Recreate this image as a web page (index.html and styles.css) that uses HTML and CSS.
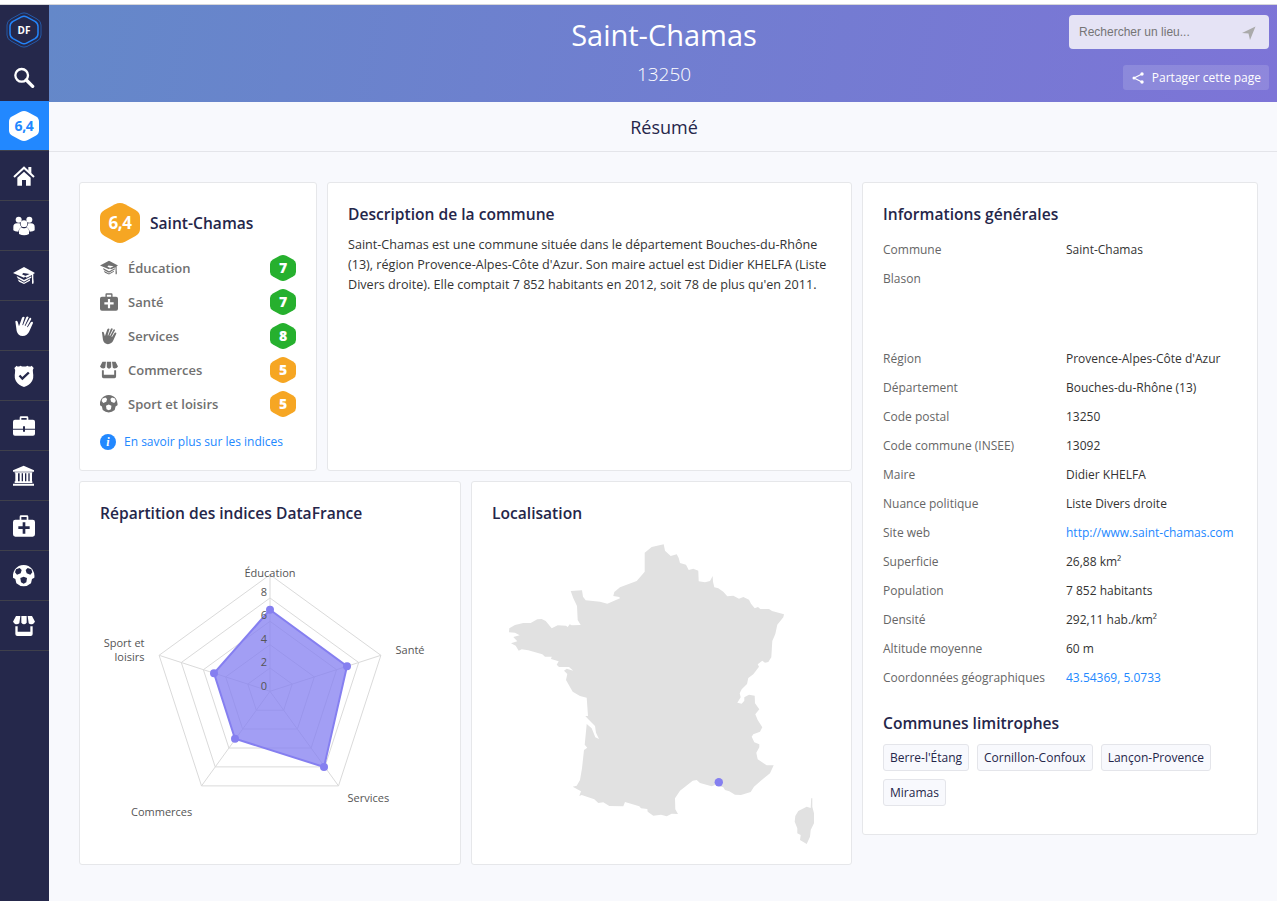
FILE: index.html
```html
<!DOCTYPE html>
<html lang="fr">
<head>
<meta charset="utf-8">
<title>Saint-Chamas</title>
<link rel="stylesheet" href="styles.css">
</head>
<body>
<svg class="defs" aria-hidden="true">
<symbol id="hex" viewBox="0 0 40 40"><path d="M15 1.3Q20-1.2 25 1.3L35.5 7Q40 9.6 40 14V26Q40 30.4 35.5 33L25 38.7Q20 41.2 15 38.7L4.500 33Q0 30.400 0 26V14Q0 9.600 4.500 7Z"/></symbol>
<symbol id="search" viewBox="0 0 66 66"><circle cx="26" cy="25" r="19" fill="none" stroke="currentColor" stroke-width="7"/><path d="M40 39L59 58" stroke="currentColor" stroke-width="10" stroke-linecap="round"/></symbol>
<symbol id="home" viewBox="0 0 66 66"><path d="M3 36L33 8L63 36" fill="none" stroke="currentColor" stroke-width="6"/><path d="M46 6h9v20l-9-8zM13 38L33 20L53 38V62H39V45H27V62H13z"/></symbol>
<symbol id="people" viewBox="0 0 66 66"><circle cx="17" cy="14" r="9"/><circle cx="49" cy="14" r="9"/><path d="M1 46V36Q1 25 12 25H20Q22 34 27 37Q18 39 16 50Q5 50 1 46ZM65 46V36Q65 25 54 25H46Q44 34 39 37Q48 39 50 50Q61 50 65 46Z"/><circle cx="33" cy="26" r="10"/><path d="M18 57V48Q18 38 27 38Q33 42 39 38Q48 38 48 48V57Q34 65 18 57Z"/></symbol>
<symbol id="cap" viewBox="0 0 66 66"><path d="M0 24L33 6L66 24L61 27V40Q63 52 61 56H57V30L41 38L35 34L50 27L31 24L27 28L38 33L33 38ZM11 33L33 45L55 34V38L33 50L14 40ZM14 43L33 53L51 43V47L33 57L18 50Z"/></symbol>
<symbol id="hand" viewBox="0 0 66 66"><path d="M7 19Q11 15 14 20L18 34L27 8Q31 3 35 7L28 30L30 31L40 6Q44 2 47 7L35 32L37 33L50 9Q54 6 55 12L42 36L44 37L54 21Q60 18 60 24L49 49Q43 63 29 63Q15 63 11 48L8 26Z"/></symbol>
<symbol id="shield" viewBox="0 0 66 66"><path fill-rule="evenodd" d="M11 2Q15 7 22 2Q33 7 44 2Q50 7 56 2L62 9Q58 14 60 23Q66 54 33 66Q0 54 6 23Q8 14 4 9ZM17 34L28 46L50 25L45 20L28 36L22 29Z"/></symbol>
<symbol id="case" viewBox="0 0 66 66"><path fill-rule="evenodd" d="M20 14V8Q20 4 24 4H42Q46 4 46 8V14H60Q66 14 66 20V41H36V34H30V41H0V20Q0 14 6 14ZM25 14H41V9H25ZM0 44H30V50H36V44H66V56Q66 62 60 62H6Q0 62 0 56Z"/></symbol>
<symbol id="bank" viewBox="0 0 66 66"><path d="M0 16L32 2L63 16V20H0ZM5 22H58V25H5ZM7 25H15V51H7ZM20 25H26V51H20ZM30 25H36V51H30ZM40 25H46V51H40ZM50 25H57V51H50ZM5 49H58V54H5ZM0 56H63V62H0Z"/></symbol>
<symbol id="med" viewBox="0 0 66 66"><path fill-rule="evenodd" d="M20 14V5Q20 1 24 1H42Q46 1 46 5V14H59Q66 14 66 21V58Q66 65 59 65H7Q0 65 0 58V21Q0 14 7 14ZM25 14H41V6H25ZM29 22V34H16V42H29V56H37V42H50V34H37V22Z"/></symbol>
<symbol id="ball" viewBox="0 0 66 66"><path fill-rule="evenodd" d="M32 0Q48 0 58 13Q66 26 64 38L57 42L54 55Q44 64 32 64Q20 64 10 55L7 42L0 38Q-2 26 6 13Q16 0 32 0ZM9 13L20 9L26 15L23 25L12 29L6 22ZM55 13L44 9L38 15L41 25L52 29L58 22ZM22 39L32 35L42 39L40 52L32 56L24 52Z"/></symbol>
<symbol id="store" viewBox="0 0 66 66"><path d="M9 3H22L19 25Q12 30 5 26L0 20ZM25 3H41V23Q33 33 25 23ZM44 3H57L66 20L61 26Q52 30 47 25ZM7 34H14V50H52V34H59V57Q59 63 53 63H13Q7 63 7 57Z"/></symbol>
</svg>
<div class="topline"></div>
<div class="app">
<nav class="side">
  <a class="logo"><svg class="logo-ring" viewBox="0 0 36 36"><path d="M15 1.5Q18 .3 21 1.500L31 7Q35 9 35 13V23Q35 27 31 29L21 34.500Q18 35.700 15 34.500L5 29Q1 27 1 23V13Q1 9 5 7Z" fill="none" stroke="#2459a8"/><path d="M15.500 4.800Q18 3.500 20.500 4.800L29 9.300Q32 11 32 14.500V21.500Q32 25 29 26.700L20.500 31.200Q18 32.500 15.500 31.200L7 26.700Q4 25 4 21.500V14.500Q4 11 7 9.300Z" fill="none" stroke="#2485fb" stroke-width="1.500"/></svg><b>DF</b></a>
  <a class="find"><svg><use href="#search"/></svg></a>
  <a class="cell on"><span class="hex note"><svg><use href="#hex"/></svg><b>6,4</b></span></a>
  <a class="cell"><svg><use href="#home"/></svg></a>
  <a class="cell"><svg><use href="#people"/></svg></a>
  <a class="cell"><svg><use href="#cap"/></svg></a>
  <a class="cell"><svg><use href="#hand"/></svg></a>
  <a class="cell"><svg><use href="#shield"/></svg></a>
  <a class="cell"><svg><use href="#case"/></svg></a>
  <a class="cell"><svg><use href="#bank"/></svg></a>
  <a class="cell"><svg><use href="#med"/></svg></a>
  <a class="cell"><svg><use href="#ball"/></svg></a>
  <a class="cell"><svg><use href="#store"/></svg></a>
</nav>
<div class="page">
<header class="head">
  <div class="titles"><h1>Saint-Chamas</h1><p>13250</p></div>
  <div class="tools">
    <div class="field"><span>Rechercher un lieu...</span><svg viewBox="0 0 14 14"><path d="M13.500 .5L0 7L6.500 7.500L8 14Z"/></svg></div>
    <a class="share"><svg viewBox="0 0 12 12"><path d="M10 2L2 6L10 10" fill="none" stroke="#fff" stroke-width="1.200"/><circle cx="10" cy="2" r="1.700"/><circle cx="2" cy="6" r="1.500"/><circle cx="10" cy="10" r="1.700"/></svg>Partager cette page</a>
  </div>
</header>
<div class="tab">Résumé</div>
<main class="content">
<div class="left">
  <div class="row">
    <section class="card scores">
      <div class="score-head"><span class="hex big orange"><svg><use href="#hex"/></svg><b>6,4</b></span><h2>Saint-Chamas</h2></div>
      <ul>
        <li><svg class="ico"><use href="#cap"/></svg><span>Éducation</span><span class="hex green"><svg><use href="#hex"/></svg><b>7</b></span></li>
        <li><svg class="ico"><use href="#med"/></svg><span>Santé</span><span class="hex green"><svg><use href="#hex"/></svg><b>7</b></span></li>
        <li><svg class="ico"><use href="#hand"/></svg><span>Services</span><span class="hex green"><svg><use href="#hex"/></svg><b>8</b></span></li>
        <li><svg class="ico"><use href="#store"/></svg><span>Commerces</span><span class="hex orange"><svg><use href="#hex"/></svg><b>5</b></span></li>
        <li><svg class="ico"><use href="#ball"/></svg><span>Sport et loisirs</span><span class="hex orange"><svg><use href="#hex"/></svg><b>5</b></span></li>
      </ul>
      <a class="more"><i>i</i>En savoir plus sur les indices</a>
    </section>
    <section class="card desc"><h2>Description de la commune</h2><p>Saint-Chamas est une commune située dans le département Bouches-du-Rhône (13), région Provence-Alpes-Côte d'Azur. Son maire actuel est Didier KHELFA (Liste Divers droite). Elle comptait 7 852 habitants en 2012, soit 78 de plus qu'en 2011.</p></section>
  </div>
  <div class="row">
    <section class="card radar"><h2>Répartition des indices DataFrance</h2>
      <svg viewBox="90 540 360 290">
        <g class="web">
          <path d="M270 574.700L380.900 655.300L338.500 785.900H201.500L159.100 655.300Z"/>
          <path d="M270 598L358.700 662.500L324.800 766.900H215.200L181.300 662.500Z"/>
          <path d="M270 621.300L336.600 669.700L311.100 748H228.900L203.400 669.700Z"/>
          <path d="M270 644.700L314.300 676.900L297.400 729H242.600L225.700 676.900Z"/>
          <path d="M270 668L292.200 684.100L283.700 710.200H256.300L247.800 684.100Z"/>
          <path d="M270 574.700V691.300L380.900 655.300M270 691.300L338.500 785.900M270 691.300L201.500 785.900M270 691.300L159.100 655.300"/>
        </g>
        <path class="area" d="M270 609.700L347 666.100L324 767L235 738.700L214 673.300Z"/>
        <g class="dots"><circle cx="270" cy="609.700" r="4"/><circle cx="347" cy="666.200" r="4"/><circle cx="324" cy="767" r="4"/><circle cx="235" cy="738.700" r="4"/><circle cx="214" cy="673.300" r="4"/></g>
        <g class="lab">
          <text x="270" y="577" text-anchor="middle">Éducation</text>
          <text x="395.500" y="654">Santé</text>
          <text x="347.500" y="802">Services</text>
          <text x="131" y="816">Commerces</text>
          <text x="144.500" y="647" text-anchor="end">Sport et</text>
          <text x="144.500" y="661" text-anchor="end">loisirs</text>
          <text x="267" y="596" text-anchor="end">8</text>
          <text x="267" y="619" text-anchor="end">6</text>
          <text x="267" y="643" text-anchor="end">4</text>
          <text x="267" y="666" text-anchor="end">2</text>
          <text x="267" y="690" text-anchor="end">0</text>
        </g>
      </svg>
    </section>
    <section class="card map"><h2>Localisation</h2>
      <svg viewBox="490 530 340 320">
        <path class="land" d="M663.700 544.300L665 550.700L670.700 556L676.700 554.300L678.700 558L680 563L686 564.700L688.700 570L693.300 568.700L698.300 570.700L698.700 581.300L705 582.300L710 581L712.700 576L713 581.700L714.300 587.300L718.300 588.300L723.300 591.700L727.300 596.300L733.300 595.700L739 598.700L743.300 597L749 599.700L751 603.700L754.700 608.300L758 607L760.300 609H769L772 611L784 614.300L783.300 617.300L777.300 624.700L775.300 634L772.300 641L771.300 657.300L768.300 662L765 662.700L762.300 660.700L757.700 664.300L759 666.700L753.300 674.300L748.300 678L747 684L741.700 689.300L739.700 693.300L740.700 697.300L737.300 702.700L741.700 703.700L744.300 700.700L744.300 697.300L749 694.700L754.700 695.700L755 703.300L759.300 709.300L755.300 714.300L757.700 720L762.300 727.300L760 731.700L753.300 734.300L751.700 736.700L754.300 742.300L759.300 744.300V747.300L756.300 752.700L757.700 759.300L766.700 765.300L773.700 765.300L770 773.300L761.700 780L754 786.700L750.700 792L741 795L735 794.700L729.300 791.300L725 790L723.300 787.300L715 785L711.700 786.300L700 783L696.700 780L692.700 780.700L680 790.700L675 798.300L675.300 809.300L678 814L671.700 813.700L666.700 816.300L661 814.700L653.300 815.700L647.700 811.700L647.300 809L641 808.300L639.300 806.300L625 802L623.300 806.300L609.300 806L603.300 802.300L598.300 803L594.300 799.300L581.700 795L579.300 796L581 791.300L572.700 786.700L576.700 785.700L580 780L582 768.300L584 750L587.300 747.700L584.700 744.700L586.700 724L591.700 728.300L595.300 737.300L599 739L596 732.700L595 726L588.300 719.300L585.300 716H588L586.700 697.700L580 696L572.700 691.700L566 680L567.300 674L564 670.700L566.700 668.700L573.300 670.700L569 667H559L556.700 664.700L558.700 661.300L551 659L551.700 656.700H545L542.300 654.300L528.300 650.300L521.700 649.300L518.700 650.700L515.700 645.700L511 643.300L517.300 641.300L513.300 637L519.700 635.300L515 632.700L509 632.300L509.300 628.300L515 625L523.300 623H530.700L537.300 619.300L541.700 619L545.700 621L551.700 628.300L557.700 625.300L566 625.700L567.700 627L569.700 624.300L571.700 625.300L580.700 625L577.700 620L577 606L573.300 598.300L570.700 591L582 590.300L583 596.700L585.700 600.300L600 601.700L607.300 603.700L620 598.300L619.300 597L613.300 596L614.300 592L620 587.300L636.700 581L644.700 571.700V552.700L651.700 547Z"/>
        <path class="land" d="M811.200 798.300H812.300V806.700L814 813.300V823.300L810.700 830L810 836.700L806.700 844L800 840L800.700 835L797.300 833.300V828.300L794.700 821.700L795.300 816L798.300 811L806.700 806.700L810.700 808Z"/>
        <circle cx="718.800" cy="782.300" r="4.200" fill="#857ff0"/>
      </svg>
    </section>
  </div>
</div>
<section class="card info">
  <h2>Informations générales</h2>
  <dl>
    <dt>Commune</dt><dd>Saint-Chamas</dd>
    <dt class="crest">Blason</dt><dd></dd>
    <dt>Région</dt><dd>Provence-Alpes-Côte d'Azur</dd>
    <dt>Département</dt><dd>Bouches-du-Rhône (13)</dd>
    <dt>Code postal</dt><dd>13250</dd>
    <dt>Code commune (INSEE)</dt><dd>13092</dd>
    <dt>Maire</dt><dd>Didier KHELFA</dd>
    <dt>Nuance politique</dt><dd>Liste Divers droite</dd>
    <dt>Site web</dt><dd><a>http://www.saint-chamas.com</a></dd>
    <dt>Superficie</dt><dd>26,88 km²</dd>
    <dt>Population</dt><dd>7 852 habitants</dd>
    <dt>Densité</dt><dd>292,11 hab./km²</dd>
    <dt>Altitude moyenne</dt><dd>60 m</dd>
    <dt>Coordonnées géographiques</dt><dd><a>43.54369, 5.0733</a></dd>
  </dl>
  <h2 class="near">Communes limitrophes</h2>
  <div class="tags"><a>Berre-l'Étang</a><a>Cornillon-Confoux</a><a>Lançon-Provence</a><a>Miramas</a></div>
</section>
</main>
</div>
</div>
</body>
</html>
```
FILE: styles.css
```css
* { box-sizing: border-box; }
body, h1, h2, p, ul, dl, dd { margin: 0; padding: 0; }
body {
  height: 901px;
  overflow: hidden;
  background: #f8f9fd;
  color: #333;
  font: 12px/20px "Open Sans", sans-serif;
}
.defs { display: none; }
.topline { height: 5px; background: #fff; border-bottom: 1px solid #d6d6d8; }
.app { display: flex; height: 896px; }

.side { flex: none; width: 49px; background: #25284b; color: #fff; }
.side a { display: grid; place-items: center; }
.side svg { width: 22px; height: 22px; fill: currentColor; }
.side .logo { height: 50px; padding-right: 1px; }
.logo > * { grid-area: 1 / 1; }
.side .logo-ring { width: 36px; height: 36px; }
.logo b { font-size: 10px; line-height: 12px; }
.side .find { height: 46px; padding-right: 2px; }
.side .find svg { margin-bottom: 1px; }
.side .cell { height: 50px; padding-right: 1px; border-bottom: 1px solid #3f404b; }
.side .cell.on { background: #2288ff; }

.hex { display: grid; place-items: center; width: 26px; height: 26px; color: #fff; }
.hex > * { grid-area: 1 / 1; }
.hex svg { width: 100%; height: 100%; }
.hex b { font-size: 14px; line-height: 20px; }
.hex.big { width: 40px; height: 40px; }
.hex.big b { font-size: 17px; font-weight: 700; letter-spacing: -.4px; }
.hex.green svg { fill: #26b02e; }
.hex.orange svg { fill: #f6a623; }
.hex.note { width: 30px; height: 30px; }
.side .note svg { width: 30px; height: 30px; fill: #fff; }
.note b { color: #2288ff; font-size: 14px; font-weight: 700; letter-spacing: -.4px; }

.page { flex: 1; min-width: 0; }
.head {
  display: grid;
  grid-template-columns: 1fr auto 1fr;
  height: 97px;
  background: linear-gradient(100deg, #6488c9, #7d74d7);
  color: #fff;
}
.titles { grid-column: 2; text-align: center; padding: 8px 0 0 2px; }
.titles h1 { font-size: 29px; font-weight: 400; line-height: 44px; }
.titles p { font-size: 19px; font-weight: 300; line-height: 34px; }
.tools { display: flex; flex-direction: column; align-items: flex-end; gap: 16px; padding: 10px 8px; }
.field {
  display: flex;
  justify-content: space-between;
  align-items: center;
  width: 200px;
  height: 34px;
  padding: 0 13px 0 10px;
  border-radius: 4px;
  background: #e5e3f5;
  color: #757575;
  font: 12px "Liberation Sans", sans-serif;
}
.field svg { width: 14px; height: 14px; fill: #aaa; margin-top: 1px; }
.share { display: flex; align-items: center; gap: 8px; height: 25px; padding: 0 8px 0 9px; border-radius: 3px; background: rgba(255,255,255,.14); font-weight: 500; font-size: 12px; }
.share svg { width: 12px; height: 12px; fill: #fff; }
.tab { height: 50px; padding-left: 2px; border-bottom: 1px solid #e4e5ea; color: #25264a; text-align: center; font-size: 18px; line-height: 50px; }

.content { display: flex; align-items: flex-start; gap: 10px; padding: 30px 19px 0 30px; }
.left { display: flex; flex-direction: column; gap: 10px; width: 773px; }
.row { display: flex; gap: 10px; }
.card { padding: 20px; border: 1px solid #e6e7ea; border-radius: 3px; background: #fff; }
h2 { color: #25264a; font-size: 15.6px; line-height: 22px; font-weight: 600; }
.card > h2 { padding-bottom: 2px; }

.scores { width: 238px; height: 289px; }
.score-head { display: flex; align-items: center; gap: 10px; margin-bottom: 8px; }
.scores ul { list-style: none; }
.scores li { display: flex; align-items: center; height: 34px; color: #707070; font-size: 13px; font-weight: 600; }
.ico { width: 18px; height: 18px; margin-right: 10px; fill: currentColor; }
.scores li .hex { margin-left: auto; }
.more { display: flex; align-items: center; gap: 8px; margin-top: 11px; color: #2288ff; }
.more i { width: 16px; height: 16px; border-radius: 50%; background: #2288ff; color: #fff; font: italic bold 12px/16px "Liberation Serif", serif; text-align: center; }

.desc { width: 525px; }
.desc p { margin-top: 8px; font-size: 12.6px; }

.radar { width: 382px; height: 384px; }
.radar svg { display: block; width: 360px; height: 290px; margin: 14px 0 0 -10px; }
.web { fill: none; stroke: #dadada; }
.area { fill: #857ff0; fill-opacity: .76; stroke: #857ff0; stroke-width: 2; }
.dots { fill: #857ff0; }
.lab { font-size: 11px; fill: #555; }
.map { width: 381px; height: 384px; }
.map svg { display: block; width: 340px; height: 320px; margin: 4px 0 0 -2px; }
.land { fill: #e1e1e1; }

.info { width: 396px; height: 653px; }
.info dl { display: grid; grid-template-columns: 183px 1fr; margin-top: 8px; }
.info dt, .info dd { height: 29px; line-height: 29px; white-space: nowrap; }
.info dt { color: #666; }
.info dt.crest { height: 80px; }
.info a { color: #2288ff; }
.info .near { margin-top: 20px; }
.tags { display: flex; flex-wrap: wrap; gap: 8px; margin-top: 8px; }
.info .tags a { height: 27px; padding: 0 6px; border: 1px solid #e4e5ea; border-radius: 3px; background: #f8f9fd; color: #25264a; line-height: 25px; }
```
